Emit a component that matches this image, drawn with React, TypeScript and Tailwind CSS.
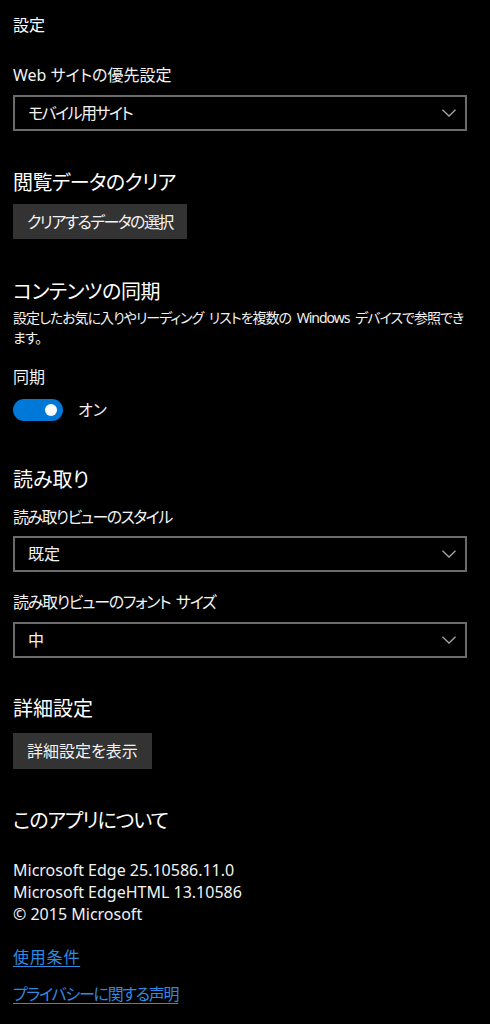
const jp = "font-['Noto_Sans','Noto_Sans_CJK_JP',sans-serif] [font-feature-settings:'palt']";

function Chevron() {
  return (
    <svg width="14" height="8" viewBox="0 0 14 8" fill="none" className="shrink-0">
      <polyline points="0.5,0.8 7,7 13.5,0.8" stroke="#a6a6a6" strokeWidth="1.3" />
    </svg>
  );
}

function Select({ value, className = "" }: { value: string; className?: string }) {
  return (
    <div className="flex h-[36px] w-full items-center justify-between border-2 border-[#6b6b6b] pl-[13px] pr-[9px] text-[16px] leading-[24px] text-[#f2f2f2]">
      <span className={className}>{value}</span>
      <Chevron />
    </div>
  );
}

function Heading({ children, className = "" }: { children: React.ReactNode; className?: string }) {
  return <h2 className={`text-[20px] leading-[28px] text-white ${className}`}>{children}</h2>;
}

function Button({ children, className = "" }: { children: React.ReactNode; className?: string }) {
  return (
    <button className={`h-[35px] self-start bg-[#333333] px-[14px] text-[16px] leading-[24px] text-[#f2f2f2] ${className}`}>
      {children}
    </button>
  );
}

export default function App() {
  return (
    <div className={`min-h-screen w-full bg-black text-white ${jp}`}>
      <div className="flex flex-col pl-[13px] pr-[23px] pt-[13px] pb-[17px]">
        <div className="text-[16px] leading-[24px]">設定</div>

        <div className="mt-[26px] text-[16px] leading-[24px] text-[#f2f2f2]">Web サイトの優先設定</div>
        <div className="mt-[8px]">
          <Select value="モバイル用サイト" className="tracking-[-1.6px]" />
        </div>

        <Heading className="mt-[38px] tracking-[-0.6px]">閲覧データのクリア</Heading>
        <Button className="mt-[7px] tracking-[-1.6px]">クリアするデータの選択</Button>

        <Heading className="mt-[39px] tracking-[-0.4px]">コンテンツの同期</Heading>
        <p className="mt-[2px] text-[14px] leading-[20px] text-[#f2f2f2] tracking-[-1px] [word-spacing:3px]">
          設定したお気に入りやリーディング リストを複数の Windows デバイスで参照できます。
        </p>

        <div className="mt-[17px] text-[16px] leading-[24px] text-[#f2f2f2]">同期</div>
        <div className="mt-[9px] flex items-center gap-[15px]">
          <div className="flex h-[22px] w-[50px] items-center justify-end rounded-full bg-[#0078d7] pr-[6px]">
            <div className="h-[12px] w-[12px] rounded-full bg-white" />
          </div>
          <span className="text-[16px] leading-[24px] text-[#f2f2f2]">オン</span>
        </div>

        <Heading className="mt-[44px]">読み取り</Heading>
        <div className="mt-[11px] text-[16px] leading-[24px] text-[#f2f2f2] tracking-[-1.6px]">読み取りビューのスタイル</div>
        <div className="mt-[7px]">
          <Select value="既定" />
        </div>
        <div className="mt-[18px] text-[16px] leading-[24px] text-[#f2f2f2] tracking-[-1.3px] [word-spacing:3px]">
          読み取りビューのフォント サイズ
        </div>
        <div className="mt-[8px]">
          <Select value="中" />
        </div>

        <Heading className="mt-[37px]">詳細設定</Heading>
        <Button className="mt-[10px] h-[36px] px-[13px]">詳細設定を表示</Button>

        <Heading className="mt-[38px] tracking-[-1.1px]">このアプリについて</Heading>
        <div className="mt-[24px] text-[16px] leading-[22px] text-[#f2f2f2]">
          <div>Microsoft Edge 25.10586.11.0</div>
          <div>Microsoft EdgeHTML 13.10586</div>
          <div>© 2015 Microsoft</div>
        </div>

        <a className="mt-[20px] self-start text-[16px] leading-[24px] text-[#2f8ae0] underline underline-offset-[3px] tracking-[0.8px]">
          使用条件
        </a>
        <a className="mt-[13px] self-start text-[16px] leading-[24px] text-[#2f8ae0] underline underline-offset-[3px] tracking-[-1.25px]">
          プライバシーに関する声明
        </a>
      </div>
    </div>
  );
}
